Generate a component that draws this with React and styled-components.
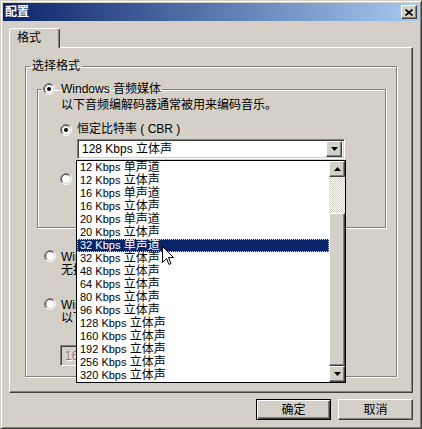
import React from 'react';
import styled, { createGlobalStyle } from 'styled-components';

const GlobalStyle = createGlobalStyle`
  html, body {
    margin: 0;
    padding: 0;
    background: #d4d0c8;
  }
  body {
    font-family: "Liberation Sans", "Noto Sans CJK SC", sans-serif;
    font-size: 12px;
    color: #000;
  }
  * {
    box-sizing: border-box;
  }
`;

const raised = `
  border: 1px solid;
  border-color: #fff #404040 #404040 #fff;
  box-shadow: inset -1px -1px 0 #808080;
  background: #d4d0c8;
`;

const sunken = `
  border: 1px solid;
  border-color: #808080 #fff #fff #808080;
  box-shadow: inset 1px 1px 0 #404040, inset -1px -1px 0 #d4d0c8;
`;

const Window = styled.div`
  position: relative;
  width: 422px;
  height: 429px;
  background: #d4d0c8;
  border: 1px solid;
  border-color: #d4d0c8 #404040 #404040 #d4d0c8;
  box-shadow: inset 1px 1px 0 #fff, inset -1px -1px 0 #808080;
  padding: 2px;
  display: flex;
  flex-direction: column;
  overflow: hidden;
`;

const TitleBar = styled.div`
  height: 18px;
  display: flex;
  align-items: center;
  justify-content: space-between;
  padding: 0 2px;
  background: linear-gradient(to right, #0a246a, #a6caf0);
`;

const Title = styled.span`
  color: #fff;
  font-weight: bold;
  font-size: 12px;
  line-height: 14px;
`;

const CloseButton = styled.div`
  ${raised}
  width: 16px;
  height: 14px;
  display: flex;
  align-items: center;
  justify-content: center;
`;

const Body = styled.div`
  padding: 7px 6px 0;
  display: flex;
  flex-direction: column;
`;

const TabStrip = styled.div`
  display: flex;
`;

const Tab = styled.div`
  position: relative;
  z-index: 1;
  width: 51px;
  height: 20px;
  margin-bottom: -1px;
  padding-left: 7px;
  line-height: 18px;
  background: #d4d0c8;
  border: 1px solid;
  border-bottom: none;
  border-color: #fff #404040 transparent #fff;
  border-radius: 3px 3px 0 0;
  box-shadow: inset -1px 0 0 #808080;
`;

const Panel = styled.div`
  width: 404px;
  height: 346px;
  border: 1px solid;
  border-color: #fff #404040 #404040 #fff;
  box-shadow: inset -1px -1px 0 #808080;
  padding: 12px 0 0 15px;
`;

const Group = styled.fieldset`
  margin: ${p => p.$top || 0}px 0 0 ${p => p.$left || 0}px;
  padding: 0 0 ${p => p.$bottom}px;
  width: ${p => p.$width}px;
  min-inline-size: 0;
  border: 1px solid #808080;
  box-shadow: inset 1px 1px 0 #fff, 1px 1px 0 #fff;
`;

const Legend = styled.legend`
  margin-left: 4px;
  padding: 0 ${p => p.$pad}px;
  line-height: 12px;
  display: flex;
  align-items: center;
  gap: 6px;
`;

const Note = styled.div`
  margin: ${p => p.$top}px 0 0 ${p => p.$left}px;
  line-height: 13px;
  white-space: nowrap;
`;

const OptionRow = styled.div`
  display: flex;
  align-items: ${p => (p.$multi ? 'flex-start' : 'center')};
  gap: 5px;
  margin: ${p => p.$top}px 0 0 ${p => p.$left}px;
  line-height: 13px;
  white-space: nowrap;
`;

const Lines = styled.div`
  padding-top: 1px;
`;

const ComboWrap = styled.div`
  position: relative;
  margin: ${p => p.$top}px 0 0 ${p => p.$left}px;
  width: ${p => p.$width}px;
`;

const Combo = styled.div`
  ${sunken}
  height: ${p => p.$height}px;
  background: ${p => (p.$disabled ? '#d4d0c8' : '#fff')};
  color: ${p => (p.$disabled ? '#808080' : '#000')};
  text-shadow: ${p => (p.$disabled ? '1px 1px 0 #fff' : 'none')};
  display: flex;
  align-items: center;
  justify-content: space-between;
  padding: 2px 2px 2px 4px;
  line-height: 14px;
  white-space: nowrap;
`;

const ArrowButton = styled.div`
  ${raised}
  width: 16px;
  height: 16px;
  flex-shrink: 0;
  display: flex;
  align-items: center;
  justify-content: center;
`;

const DropList = styled.div`
  position: absolute;
  z-index: 10;
  left: -1px;
  top: 21px;
  width: 270px;
  height: 223px;
  border: 1px solid #000;
  background: #fff;
  display: flex;
`;

const Items = styled.div`
  flex: 1;
`;

const Item = styled.div`
  height: 13px;
  line-height: 13px;
  padding-left: 3px;
  white-space: nowrap;
  background: ${p => (p.$selected ? '#0a246a' : '#fff')};
  color: ${p => (p.$selected ? '#fff' : '#000')};
  outline: ${p => (p.$selected ? '1px dotted #d8d090' : 'none')};
  outline-offset: -1px;
`;

const Rate = styled.span`
  font-size: 11px;
`;

const ScrollBar = styled.div`
  width: 16px;
  display: flex;
  flex-direction: column;
`;

const Track = styled.div`
  height: ${p => p.$height}px;
  background: repeating-conic-gradient(#fff 0 25%, #d4d0c8 0 50%) 0 0 / 2px 2px;
`;

const Thumb = styled.div`
  ${raised}
  flex: 1;
`;

const ButtonRow = styled.div`
  width: 404px;
  margin-top: 6px;
  display: flex;
  justify-content: flex-end;
  gap: 7px;
`;

const Button = styled.div`
  width: 75px;
  height: 21px;
  display: flex;
  align-items: center;
  justify-content: center;
  background: #d4d0c8;
  border: 1px solid;
  border-color: ${p => (p.$default ? '#000' : '#fff #404040 #404040 #fff')};
  box-shadow: ${p =>
    p.$default
      ? 'inset 1px 1px 0 #fff, inset -1px -1px 0 #404040, inset -2px -2px 0 #808080'
      : 'inset -1px -1px 0 #808080'};
  line-height: 14px;
`;

const Pointer = styled.svg`
  position: absolute;
  z-index: 20;
  left: 161px;
  top: 245px;
`;

const Radio = ({ checked }) => (
  <svg width="12" height="12" viewBox="0 0 12 12" style={{ flexShrink: 0 }}>
    <circle cx="6" cy="6" r="5" fill="#fff" />
    <path d="M2.1 9.9 A5.5 5.5 0 0 1 9.9 2.1" fill="none" stroke="#808080" />
    <path d="M9.9 2.1 A5.5 5.5 0 0 1 2.1 9.9" fill="none" stroke="#fff" />
    <path d="M2.8 9.2 A4.5 4.5 0 0 1 9.2 2.8" fill="none" stroke="#404040" />
    <path d="M9.2 2.8 A4.5 4.5 0 0 1 2.8 9.2" fill="none" stroke="#d4d0c8" />
    {checked && <circle cx="6" cy="6" r="2" fill="#000" />}
  </svg>
);

const Triangle = ({ up }) => (
  <svg width="7" height="4" viewBox="0 0 7 4">
    <path d={up ? 'M3.5 0 L7 4 L0 4 Z' : 'M0 0 L7 0 L3.5 4 Z'} fill="#000" />
  </svg>
);

const rates = [
  ['12', '单声道'],
  ['12', '立体声'],
  ['16', '单声道'],
  ['16', '立体声'],
  ['20', '单声道'],
  ['20', '立体声'],
  ['32', '单声道'],
  ['32', '立体声'],
  ['48', '立体声'],
  ['64', '立体声'],
  ['80', '立体声'],
  ['96', '立体声'],
  ['128', '立体声'],
  ['160', '立体声'],
  ['192', '立体声'],
  ['256', '立体声'],
  ['320', '立体声'],
];

export default function App() {
  return (
    <>
      <GlobalStyle />
      <Window>
        <TitleBar>
          <Title>配置</Title>
          <CloseButton>
            <svg width="8" height="7" viewBox="0 0 8 7">
              <path d="M0.5 0.5 L7.5 6.5 M7.5 0.5 L0.5 6.5" stroke="#000" strokeWidth="1.6" />
            </svg>
          </CloseButton>
        </TitleBar>
        <Body>
          <TabStrip>
            <Tab>格式</Tab>
          </TabStrip>
          <Panel>
            <Group $width={372} $bottom={10}>
              <Legend $pad={2}>选择格式</Legend>
              <Group $width={349} $top={11} $left={11} $bottom={18}>
                <Legend $pad={1}>
                  <Radio checked />
                  Windows 音频媒体
                </Legend>
                <Note $top={4} $left={23}>以下音频编解码器通常被用来编码音乐。</Note>
                <OptionRow $top={11} $left={22}>
                  <Radio checked />
                  恒定比特率 ( CBR )
                </OptionRow>
                <ComboWrap $top={3} $left={39} $width={268}>
                  <Combo $height={20}>
                    128 Kbps 立体声
                    <ArrowButton>
                      <Triangle />
                    </ArrowButton>
                  </Combo>
                  <DropList>
                    <Items>
                      {rates.map(([kbps, mode], i) => (
                        <Item key={i} $selected={i === 6}>
                          <Rate>{kbps} Kbps</Rate> {mode}
                        </Item>
                      ))}
                    </Items>
                    <ScrollBar>
                      <ArrowButton>
                        <Triangle up />
                      </ArrowButton>
                      <Track $height={36} />
                      <Thumb />
                      <ArrowButton>
                        <Triangle />
                      </ArrowButton>
                    </ScrollBar>
                  </DropList>
                </ComboWrap>
                <OptionRow $top={13} $left={22}>
                  <Radio />
                  可变比特率 ( VBR )
                </OptionRow>
                <ComboWrap $top={4} $left={39} $width={268}>
                  <Combo $height={20} $disabled>
                    质量 90
                  </Combo>
                </ComboWrap>
              </Group>
              <OptionRow $multi $top={22} $left={18}>
                <Radio />
                <Lines>
                  <div>Windows 音频媒体无损</div>
                  <div>无损压缩可以保留原始音乐的全部音质。</div>
                </Lines>
              </OptionRow>
              <OptionRow $multi $top={21} $left={18}>
                <Radio />
                <Lines>
                  <div>Windows 音频媒体语音</div>
                  <div>以下编解码器适用于以语音为主的内容。</div>
                </Lines>
              </OptionRow>
              <ComboWrap $top={20} $left={34} $width={270}>
                <Combo $height={21} $disabled>
                  16 Kbps, 16 kHz, 单声道
                </Combo>
              </ComboWrap>
            </Group>
          </Panel>
          <ButtonRow>
            <Button $default>确定</Button>
            <Button>取消</Button>
          </ButtonRow>
        </Body>
        <Pointer width="12" height="20" viewBox="0 0 12 20">
          <path
            d="M0.5 0.5 L0.5 16.5 L4.5 12.5 L7 18.5 L9 17.5 L6.5 11.5 L11.5 11.5 Z"
            fill="#fff"
            stroke="#000"
            strokeLinejoin="miter"
          />
        </Pointer>
      </Window>
    </>
  );
}
